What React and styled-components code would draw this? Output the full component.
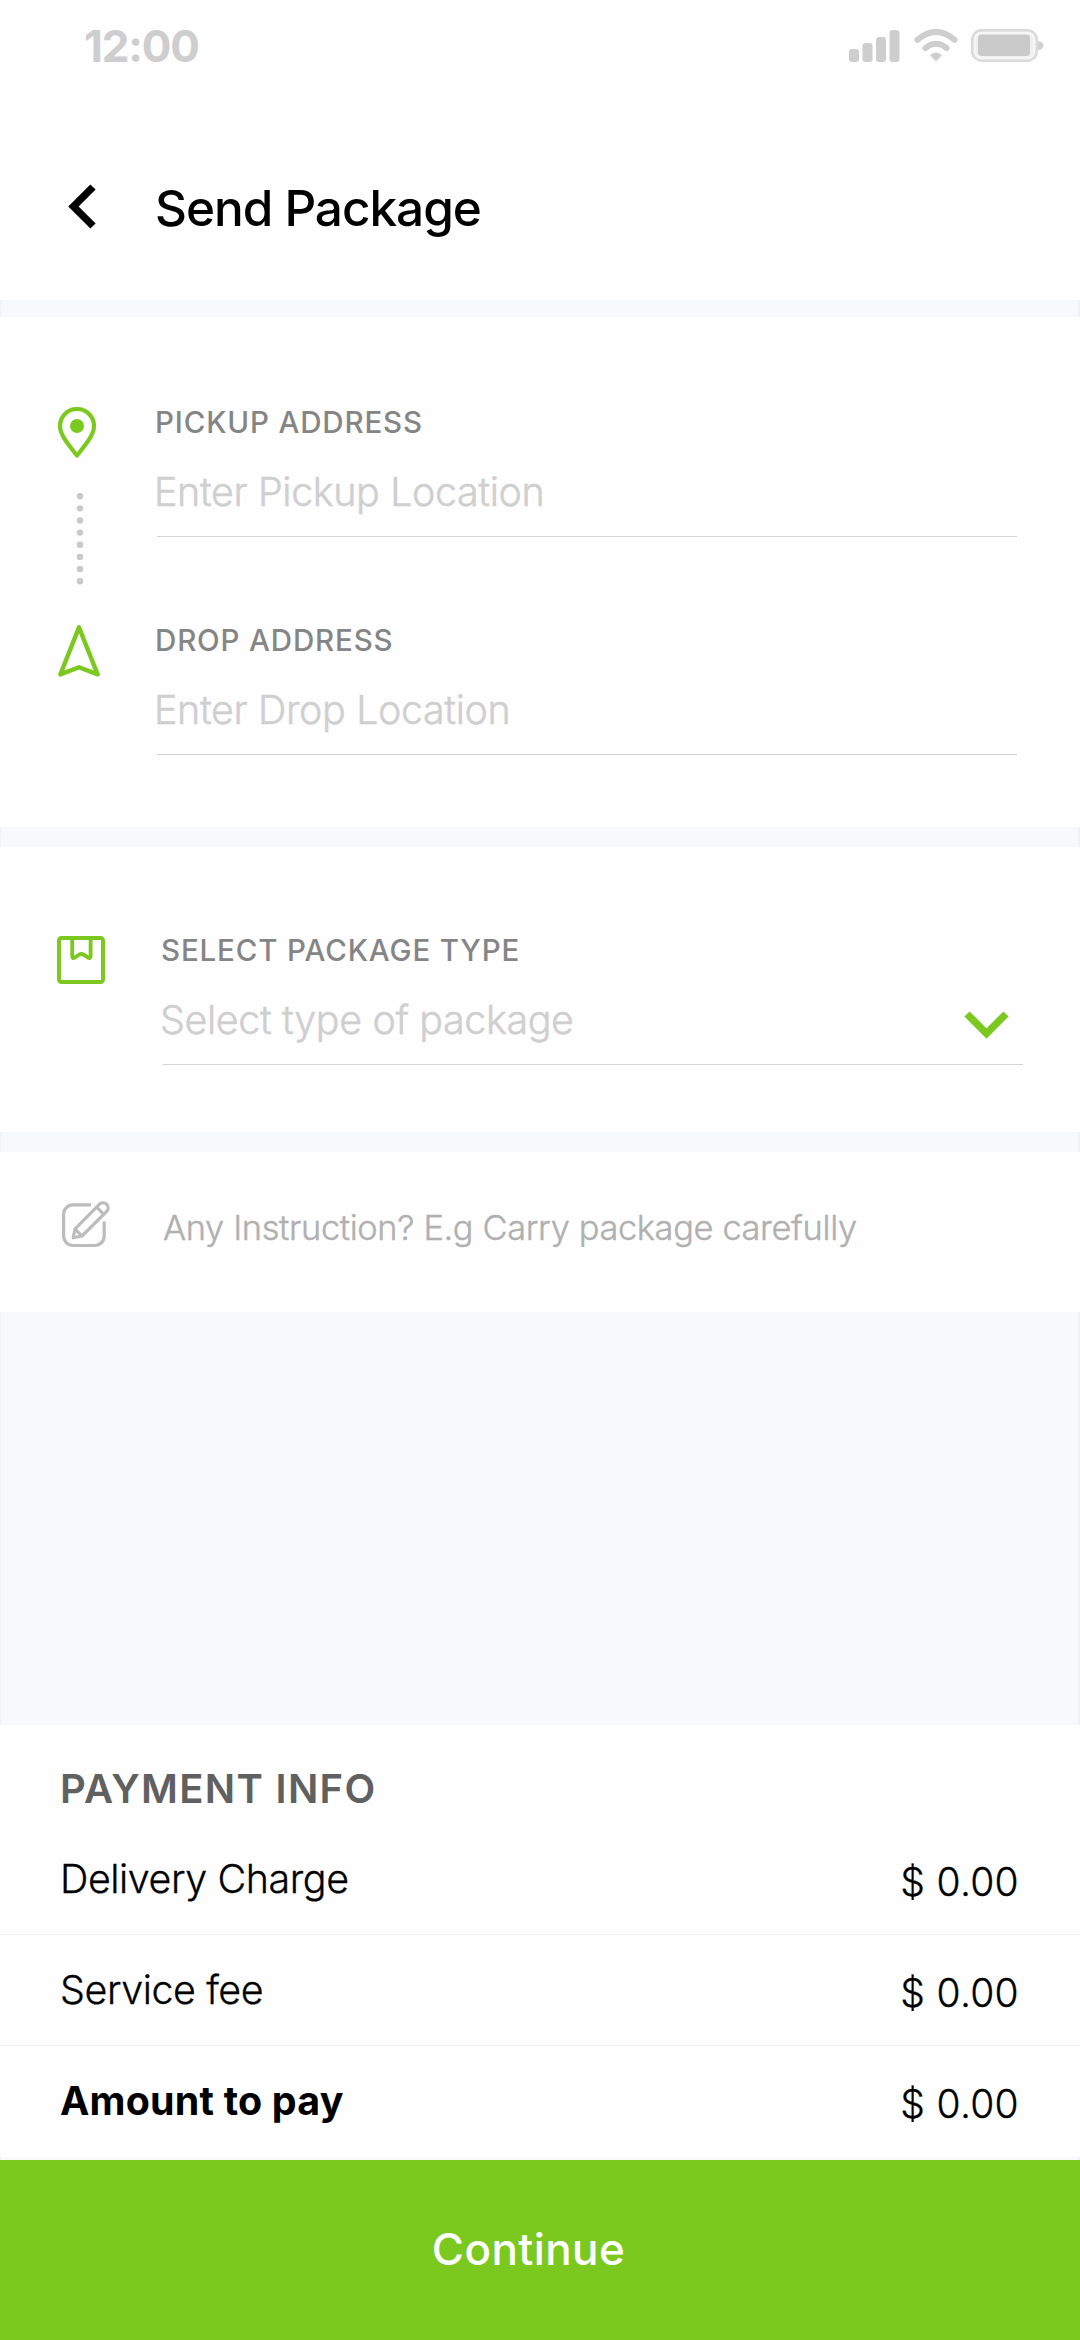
import React from 'react';
import styled, { createGlobalStyle } from 'styled-components';

const charges = [
  { label: 'Delivery Charge', amount: '$ 0.00' },
  { label: 'Service fee', amount: '$ 0.00' },
  { label: 'Amount to pay', amount: '$ 0.00', total: true },
];

const App = () => {
  return (
    <Screen>
      <GlobalStyle />
      <StatusBar>
        <Clock>12:00</Clock>
        <StatusIcons>
          <SignalIcon />
          <WifiIcon />
          <BatteryIcon />
        </StatusIcons>
      </StatusBar>

      <Header>
        <BackButton aria-label="Back">
          <svg width="28" height="45" viewBox="0 0 28 45">
            <path d="M25 3L5.5 22.5L25 42" fill="none" stroke="#000" strokeWidth="7.4" />
          </svg>
        </BackButton>
        <Title>Send Package</Title>
      </Header>
      <Divider $height={17} />

      <AddressSection>
        <Rail>
          <PinIcon />
          <DottedLine />
          <ArrowIcon />
        </Rail>
        <Fields>
          <Field>
            <Label>Pickup Address</Label>
            <Placeholder>Enter Pickup Location</Placeholder>
          </Field>
          <Field>
            <Label>Drop Address</Label>
            <Placeholder>Enter Drop Location</Placeholder>
          </Field>
        </Fields>
      </AddressSection>
      <Divider $height={20} />

      <PackageSection>
        <PackageIcon />
        <Field>
          <Label>Select Package Type</Label>
          <Placeholder>
            Select type of package
            <svg width="45" height="28" viewBox="0 0 45 28">
              <path d="M3 3L22.5 22.5L42 3" fill="none" stroke="#7bc91e" strokeWidth="7.4" />
            </svg>
          </Placeholder>
        </Field>
      </PackageSection>
      <Divider $height={20} />

      <InstructionSection>
        <EditIcon />
        <Instruction>Any Instruction? E.g Carry package carefully</Instruction>
      </InstructionSection>
      <Filler />

      <Payment>
        <PaymentTitle>Payment Info</PaymentTitle>
        {charges.map(({ label, amount, total }) => (
          <ChargeRow key={label} $total={total}>
            <ChargeLabel $total={total}>{label}</ChargeLabel>
            <Amount>{amount}</Amount>
          </ChargeRow>
        ))}
      </Payment>
      <Divider $height={3} />
      <ContinueButton>Continue</ContinueButton>
    </Screen>
  );
};

const SignalIcon = () => (
  <svg width="51" height="33" viewBox="0 0 51 33" fill="#cecece">
    <rect x="0" y="20" width="10" height="13" rx="3" />
    <rect x="13.5" y="14" width="10" height="19" rx="3" />
    <rect x="27" y="8" width="10" height="25" rx="3" />
    <rect x="40.5" y="1" width="10" height="32" rx="3" />
  </svg>
);

const WifiIcon = () => (
  <svg width="46" height="33" viewBox="0 0 46 33" fill="none" stroke="#cecece" strokeWidth="6" strokeLinecap="round">
    <path d="M4.5 10.8Q23 -5 41.5 10.8" />
    <path d="M12.5 19Q23 10.5 33.5 19" />
    <path d="M17 26Q23 21 29 26L23 32.5Z" fill="#cecece" stroke="none" />
  </svg>
);

const BatteryIcon = () => (
  <svg width="73" height="33" viewBox="0 0 73 33">
    <rect x="1.2" y="1.2" width="64.6" height="30.6" rx="9.5" fill="#f0f0f0" stroke="#dadada" strokeWidth="2.4" />
    <rect x="4" y="4" width="59" height="25" rx="6.5" fill="none" stroke="#f8f8f8" strokeWidth="1.6" />
    <rect x="7" y="5.5" width="52" height="21.5" rx="4" fill="#cacaca" />
    <path d="M67 12Q72.5 12.5 72.5 16.5T67 21Z" fill="#d2d2d2" />
  </svg>
);

const PinIcon = () => (
  <svg width="38" height="52" viewBox="0 0 38 52">
    <path
      d="M19 48.5C12.5 40 2 29 2 19A17 17 0 0 1 36 19C36 29 25.5 40 19 48.5Z"
      fill="none"
      stroke="#7bc91e"
      strokeWidth="4.2"
      strokeLinejoin="round"
    />
    <circle cx="19" cy="19" r="7" fill="#7bc91e" />
  </svg>
);

const DottedLine = () => (
  <svg width="44" height="98" viewBox="0 0 44 98">
    <path d="M22 3.2V89" stroke="#c9c9c9" strokeWidth="6.4" strokeLinecap="round" strokeDasharray="0 12.14" />
  </svg>
);

const ArrowIcon = () => (
  <svg width="42" height="52" viewBox="0 0 42 52">
    <path
      d="M21 2.4L39.6 49.4L21 42.2L2.4 49.4Z"
      fill="none"
      stroke="#7bc91e"
      strokeWidth="4.4"
      strokeLinejoin="round"
    />
  </svg>
);

const PackageIcon = () => (
  <svg width="48" height="48" viewBox="0 0 48 48" fill="none" stroke="#7bc91e" strokeWidth="4">
    <rect x="2" y="2" width="44" height="44" rx="2.5" />
    <path
      d="M15.2 3V20.4Q15.4 22.8 17.8 21.6L21.8 18.9Q24.4 17.2 27 18.9L31 21.6Q33.4 22.8 33.6 20.4V3"
      strokeWidth="3.8"
    />
  </svg>
);

const EditIcon = () => (
  <svg width="48" height="48" viewBox="0 0 48 48" fill="none" stroke="#bcbcbc" strokeWidth="3.2">
    <path d="M29 4.8H11A9.5 9.5 0 0 0 1.6 14.3V36A9.5 9.5 0 0 0 11 45.5H32.7A9.5 9.5 0 0 0 42.2 36V21.5" />
    <path d="M11.2 37.8L13 29L37.8 3.8A5.2 5.2 0 0 1 45 11.2L20 36Z" strokeLinejoin="round" />
    <path d="M34.5 7L41.5 14.2M13.2 29.2L19.8 36" />
  </svg>
);

const GlobalStyle = createGlobalStyle`
  *{
    box-sizing: border-box;
  }
  body{
    margin: 0;
    background-color: #fefefe;
    font-family: Inter, "Liberation Sans", sans-serif;
  }
  svg{
    display: block;
    flex-shrink: 0;
  }
`

const Screen = styled.main`
  display: flex;
  flex-direction: column;
  width: 1080px;
  height: 2340px;
  background-color: #fefefe;
  overflow: hidden;
`

const StatusBar = styled.div`
  display: flex;
  align-items: center;
  justify-content: space-between;
  height: 91px;
  padding: 0 36px 0 84px;
`

const Clock = styled.span`
  font-size: 44px;
  font-weight: 700;
  letter-spacing: -1.2px;
  line-height: 44px;
  color: #cecece;
`

const StatusIcons = styled.div`
  display: flex;
  gap: 12.5px;
`

const Header = styled.header`
  display: flex;
  align-items: center;
  height: 209px;
  padding: 25px 68px 0;
`

const BackButton = styled.button`
  border: none;
  padding: 0;
  margin: -4px 59px 0 0;
  background-color: transparent;
`

const Title = styled.h1`
  margin: 0;
  font-size: 49.5px;
  font-weight: 500;
  letter-spacing: -1.05px;
  color: #000;
`

const Divider = styled.div`
  flex-shrink: 0;
  height: ${({ $height }) => $height}px;
  background-color: #f8f9fd;
  border-left: 1px solid #f1f2f6;
  border-right: 2px solid #f1f2f6;
`

const Filler = styled(Divider)`
  flex: 1;
  height: auto;
`

const AddressSection = styled.section`
  display: grid;
  grid-template-columns: 99px 1fr;
  height: 510px;
  padding: 90px 63px 0 58px;
`

const Rail = styled.div`
  display: flex;
  flex-direction: column;
  justify-content: space-between;
  height: 270px;
`

const Fields = styled.div`
  display: flex;
  flex-direction: column;
  gap: 88px;
`

const Field = styled.div`
  display: flex;
  flex-direction: column;
  flex: 0 0 130px;
  gap: 35px;
  border-bottom: 1px solid #d4d4d4;
`

const Label = styled.label`
  margin-left: -2px;
  font-size: 29.5px;
  font-weight: 500;
  line-height: 30px;
  letter-spacing: 0.85px;
  text-transform: uppercase;
  color: #858585;
`

const Placeholder = styled.div`
  display: flex;
  justify-content: space-between;
  margin-left: -3px;
  padding-right: 14px;
  font-size: 39.4px;
  font-weight: 300;
  line-height: 40px;
  letter-spacing: -0.36px;
  color: #cfcfcf;
  -webkit-text-stroke: 0.5px #cfcfcf;

  svg{
    margin-top: 11px;
  }
`

const PackageSection = styled.section`
  display: grid;
  grid-template-columns: 106px 1fr;
  align-items: start;
  height: 285px;
  padding: 88px 57px 0;

  > svg{
    margin-top: 1px;
  }

  ${Field}{
    height: 130px;
  }
`

const InstructionSection = styled.section`
  display: flex;
  align-items: center;
  gap: 53px;
  height: 160px;
  padding: 0 62px 9px;

  svg{
    margin-top: -8px;
  }
`

const Instruction = styled.p`
  margin: 0;
  font-size: 34.4px;
  font-weight: 300;
  letter-spacing: -0.36px;
  color: #b0b0b0;
  -webkit-text-stroke: 0.4px #b0b0b0;
`

const Payment = styled.section`
  height: 432px;
  padding-top: 44px;
`

const PaymentTitle = styled.h2`
  margin: 0 0 15px 60px;
  font-size: 40px;
  font-weight: 600;
  line-height: 40px;
  letter-spacing: 1.3px;
  text-transform: uppercase;
  color: #606060;
`

const ChargeRow = styled.div`
  display: flex;
  align-items: center;
  justify-content: space-between;
  height: 111px;
  padding: 0 61px 0 60px;
  border-bottom: 1px solid ${({ $total }) => ($total ? 'transparent' : '#efefef')};
`

const ChargeLabel = styled.span`
  font-size: 39.4px;
  font-weight: ${({ $total }) => ($total ? 700 : 300)};
  letter-spacing: ${({ $total }) => ($total ? '0.2px' : '-0.42px')};
  color: #000;
  -webkit-text-stroke: ${({ $total }) => ($total ? '0' : '0.3px #000')};
`

const Amount = styled.span`
  padding-top: 5px;
  font-size: 39px;
  font-weight: 300;
  letter-spacing: 0.3px;
  color: #000;
  -webkit-text-stroke: 0.3px #000;
`

const ContinueButton = styled.button`
  flex-shrink: 0;
  height: 180px;
  border: none;
  padding: 0 23px 2px 0;
  background-color: #7bc91e;
  font-family: inherit;
  font-size: 44px;
  font-weight: 500;
  letter-spacing: 0.4px;
  color: #fff;
`

export default App;
